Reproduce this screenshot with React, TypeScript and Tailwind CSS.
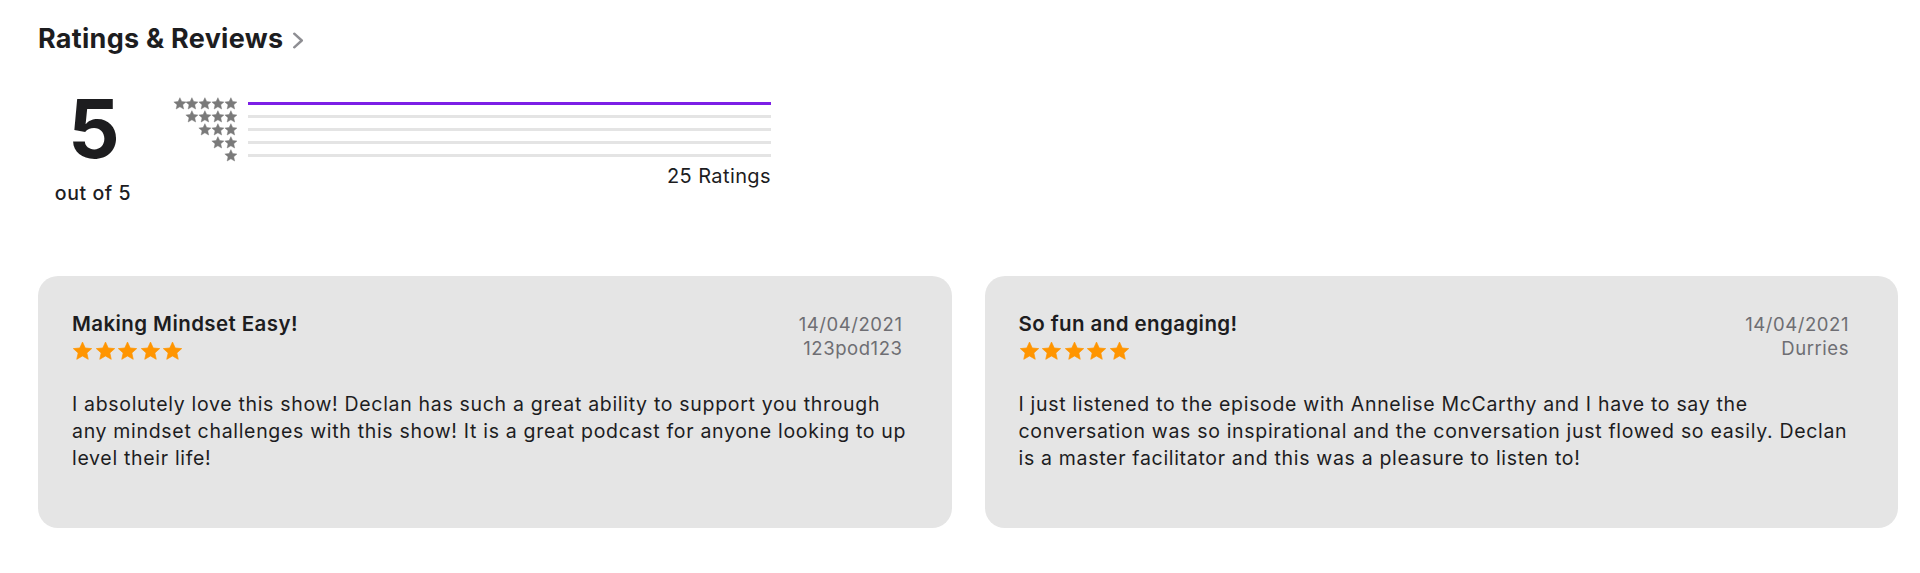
const reviews = [
  {
    title: "Making Mindset Easy!",
    date: "14/04/2021",
    author: "123pod123",
    body: "I absolutely love this show! Declan has such a great ability to support you through any mindset challenges with this show! It is a great podcast for anyone looking to up level their life!",
  },
  {
    title: "So fun and engaging!",
    date: "14/04/2021",
    author: "Durries",
    body: "I just listened to the episode with Annelise McCarthy and I have to say the conversation was so inspirational and the conversation just flowed so easily. Declan is a master facilitator and this was a pleasure to listen to!",
  },
];

const STAR =
  "M12 1.2l3.1 6.75 7.4.75-5.55 4.95 1.6 7.25L12 17.1l-6.55 3.8 1.6-7.25L1.5 8.7l7.4-.75z";

function Star({ className }: { className: string }) {
  return (
    <svg viewBox="0 0 24 24" className={className} aria-hidden="true">
      <path d={STAR} fill="currentColor" strokeLinejoin="round" stroke="currentColor" strokeWidth={0.8} />
    </svg>
  );
}

function RatingSummary() {
  const rows = [5, 4, 3, 2, 1];
  return (
    <div className="mt-[34px] flex items-start">
      <div className="flex w-[110px] flex-col items-center">
        <div className="text-[81px] font-bold leading-[81px] tracking-[-0.02em] text-[#1d1d1f]">
          5
        </div>
        <div className="mt-[12px] text-[19.5px] font-medium leading-[22px] tracking-[0.03em] text-[#1d1d1f]">
          out of 5
        </div>
      </div>
      <div className="mt-[8px] flex flex-col">
        {rows.map((n) => (
          <div key={n} className="flex h-[13px] items-center">
            <div className="flex w-[89px] justify-end">
              {Array.from({ length: n }).map((_, i) => (
                <Star key={i} className="-mx-[0.5px] size-[13.8px] text-[#7a7a7a]" />
              ))}
            </div>
            <div
              className={`ml-[11px] h-[3px] w-[523px] ${
                n === 5 ? "bg-[#7c1fe6]" : "bg-[#e4e4e4]"
              }`}
            />
          </div>
        ))}
        <div className="mt-[2px] text-right text-[20px] leading-[24px] tracking-[0.02em] text-[#1d1d1f]">
          25 Ratings
        </div>
      </div>
    </div>
  );
}

function ReviewCard({ review }: { review: (typeof reviews)[number] }) {
  return (
    <div className="h-[252px] rounded-[20px] bg-[#e5e5e5] pl-[34px] pr-[37px] pt-[36px]">
      <div className="flex items-start justify-between">
        <div>
          <div className="text-[20.5px] font-semibold leading-[24px] tracking-[0.02em] text-[#1d1d1f]">
            {review.title}
          </div>
          <div className="mt-[5px] flex gap-[1.5px]">
            {Array.from({ length: 5 }).map((_, i) => (
              <Star key={i} className="size-[21px] text-[#ff9500]" />
            ))}
          </div>
        </div>
        <div className="mr-[12px] text-right text-[18.5px] leading-[24px] tracking-[0.03em] text-[#6e6e73]">
          <div>{review.date}</div>
          <div>{review.author}</div>
        </div>
      </div>
      <p className="mt-[29px] text-[19.5px] leading-[27px] tracking-[0.035em] text-[#1d1d1f]">
        {review.body}
      </p>
    </div>
  );
}

export default function App() {
  return (
    <div className="h-[573px] w-full bg-white pl-[38px] pr-[22px] pt-[23px] font-['Inter',sans-serif]">
      <div className="flex items-center">
        <h2 className="text-[27px] font-bold leading-[32px] tracking-[0.01em] text-[#1d1d1f]">
          Ratings &amp; Reviews
        </h2>
        <svg viewBox="0 0 12 18" className="ml-[9px] mt-[2px] h-[17px] w-[12px]" aria-hidden="true">
          <polyline
            points="2,1.8 10,9 2,16.2"
            fill="none"
            stroke="#8e8e93"
            strokeWidth={2.6}
            strokeLinecap="round"
            strokeLinejoin="round"
          />
        </svg>
      </div>
      <RatingSummary />
      <div className="mt-[72px] grid grid-cols-2 gap-[33px]">
        {reviews.map((r) => (
          <ReviewCard key={r.author} review={r} />
        ))}
      </div>
    </div>
  );
}
